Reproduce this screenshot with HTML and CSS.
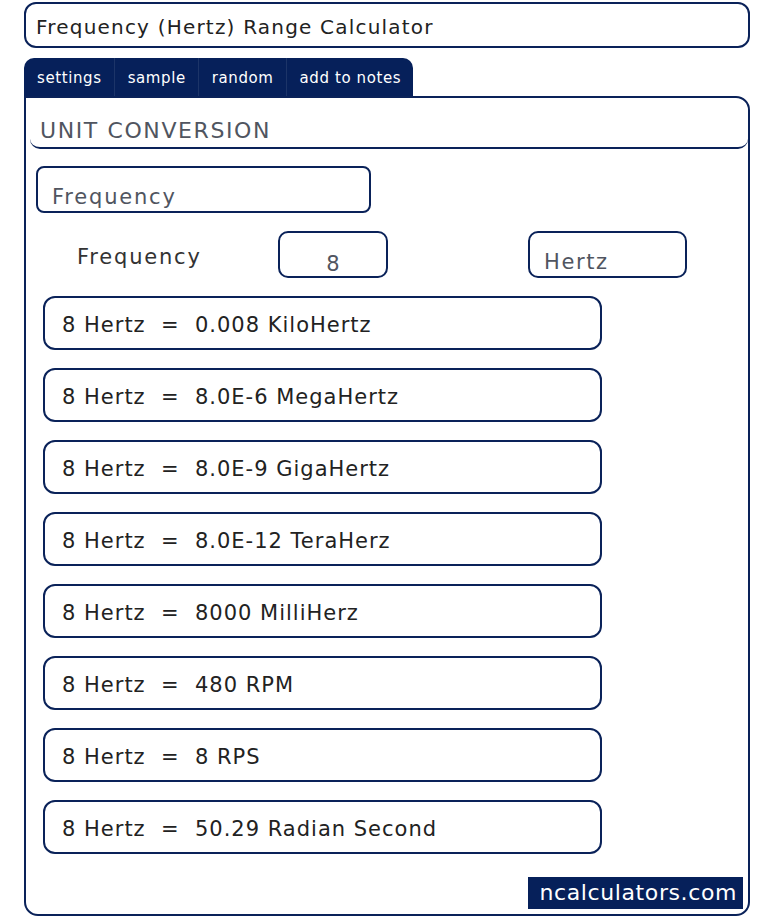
FILE: index.html
```html
<!DOCTYPE html>
<html lang="en">
<head>
    <meta charset="UTF-8">
    <meta name="viewport" content="width=device-width, initial-scale=1.0">
    <title>Frequency (Hertz) Range Calculator</title>
    <link rel="stylesheet" href="styles.css">
</head>
<body>

<div class="page">
    <!-- Title -->
    <div class="title-box">Frequency (Hertz) Range Calculator</div>

    <!-- Tabs -->
    <ul class="tabs">
        <li>settings</li>
        <li>sample</li>
        <li>random</li>
        <li>add to notes</li>
    </ul>

    <div class="panel">
        <h2 class="panel-heading">UNIT CONVERSION</h2>

        <div class="select-box">Frequency</div>

        <div class="input-row">
            <span class="input-label">Frequency</span>
            <div class="value-box">8</div>
            <div class="unit-box">Hertz</div>
        </div>

        <!-- Results -->
        <div class="results">
            <div class="result">8 Hertz&nbsp; =&nbsp; 0.008 KiloHertz</div>
            <div class="result">8 Hertz&nbsp; =&nbsp; 8.0E-6 MegaHertz</div>
            <div class="result">8 Hertz&nbsp; =&nbsp; 8.0E-9 GigaHertz</div>
            <div class="result">8 Hertz&nbsp; =&nbsp; 8.0E-12 TeraHerz</div>
            <div class="result">8 Hertz&nbsp; =&nbsp; 8000 MilliHerz</div>
            <div class="result">8 Hertz&nbsp; =&nbsp; 480 RPM</div>
            <div class="result">8 Hertz&nbsp; =&nbsp; 8 RPS</div>
            <div class="result">8 Hertz&nbsp; =&nbsp; 50.29 Radian Second</div>
        </div>

        <div class="footer">
            <span class="brand">ncalculators.com</span>
        </div>
    </div>
</div>

</body>
</html>
```

FILE: styles.css
```css
body { margin: 0; background: #fff; font-family: "DejaVu Sans", Arial, sans-serif; color: #222; }
.page { width: 726px; margin-left: 24px; padding-top: 2px; }

.title-box { height: 42px; border: 2px solid #0a2259; border-radius: 12px; padding-left: 10px; font-size: 20px; letter-spacing: 1.2px; line-height: 47px; color: #222; }

.tabs { list-style: none; margin: 10px 0 0 0; padding: 0; display: flex; width: fit-content; height: 38px; background: #06205a; border-radius: 10px 10px 0 0; }
.tabs li { color: #fff; font-size: 15px; letter-spacing: 0.6px; line-height: 40px; white-space: nowrap; padding: 0 12px 0 13px; border-right: 1px solid #1c3468; }
.tabs li:last-child { border-right: none; }

.panel { border: 2px solid #0a2259; border-radius: 0 14px 14px 14px; height: 816px; display: flex; flex-direction: column; }
.panel-heading { margin: 20px 0 0 4px; padding: 0 0 3px 10px; font-size: 22px; letter-spacing: 1.6px; font-weight: normal; color: #505560; line-height: 26px; border-bottom: 2px solid #0a2259; border-radius: 0 0 10px 10px; }

.select-box { margin: 17px 0 0 10px; width: 317px; height: 43px; border: 2px solid #0a2259; border-radius: 8px; padding-left: 14px; font-size: 21px; letter-spacing: 1.8px; line-height: 58px; color: #505560; }

.input-row { display: flex; align-items: flex-start; margin-top: 18px; height: 47px; }
.input-label { width: 201px; padding-left: 51px; font-size: 21px; letter-spacing: 1.8px; line-height: 52px; color: #333; }
.value-box { width: 106px; height: 43px; border: 2px solid #0a2259; border-radius: 10px; text-align: center; font-size: 21px; line-height: 62px; color: #505560; }
.unit-box { margin-left: 140px; width: 141px; height: 43px; border: 2px solid #0a2259; border-radius: 10px; padding-left: 14px; font-size: 21px; letter-spacing: 1.6px; line-height: 58px; color: #505560; }

.results { display: flex; flex-direction: column; gap: 18px; margin: 18px 0 0 17px; }
.result { width: 538px; height: 50px; border: 2px solid #0a2259; border-radius: 12px; padding-left: 17px; font-size: 21px; letter-spacing: 1px; line-height: 54px; color: #222; }

.footer { margin-top: auto; display: flex; justify-content: flex-end; padding: 0 5px 5px 0; }
.brand { display: block; background: #06205a; color: #fff; font-size: 22px; letter-spacing: 0.6px; line-height: 32px; padding: 0 6px 0 12px; }
```
